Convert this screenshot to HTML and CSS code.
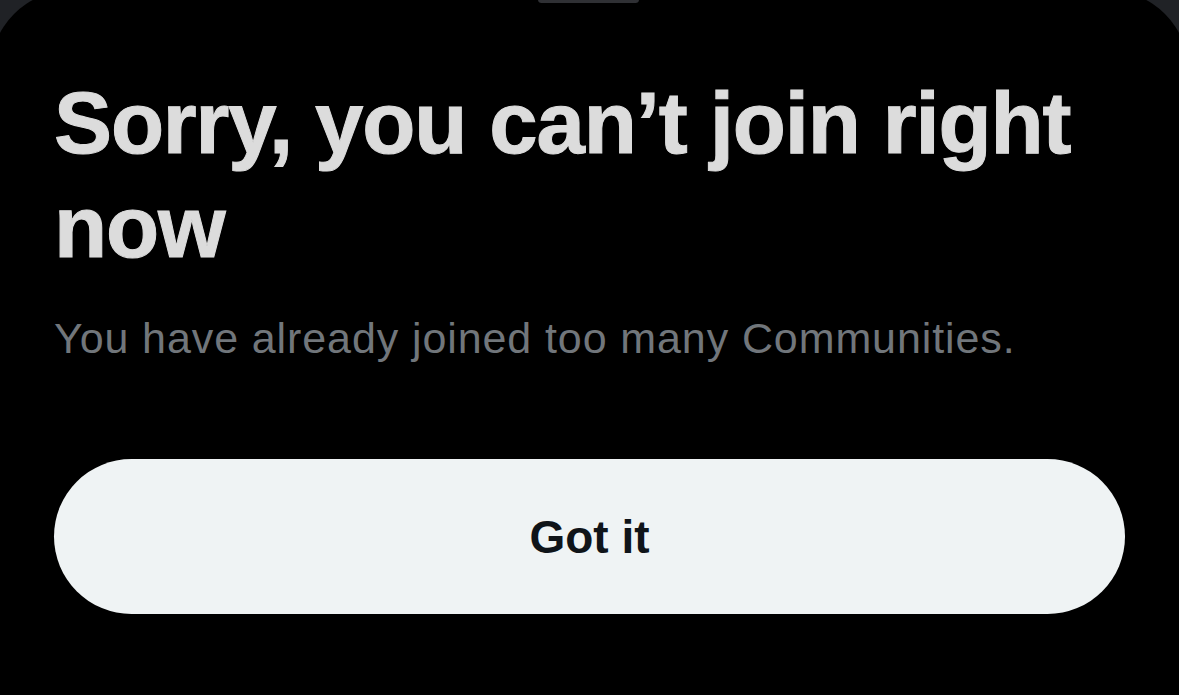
FILE: index.html
```html
<!DOCTYPE html>
<html lang="en">
<head>
  <meta charset="UTF-8">
  <meta name="viewport" content="width=device-width, initial-scale=1.0">
  <title>Sorry, you can’t join right now</title>
  <link rel="stylesheet" href="styles.css">
</head>
<body>
  <div class="sheet">
    <div class="handle"></div>
    <h1 class="title">Sorry, you can’t join right now</h1>
    <p class="message">You have already joined too many Communities.</p>
    <button class="got-it">Got it</button>
  </div>
</body>
</html>
```

FILE: styles.css
```css
* {
  box-sizing: border-box;
}
body {
  margin: 0;
  height: 695px;
  overflow: hidden;
  background: #202226;
  font-family: 'Liberation Sans', Arial, sans-serif;
}
.sheet {
  position: relative;
  margin: -10px -10px 0;
  min-height: 720px;
  padding: 81px 64px 0;
  background: #000;
  border-radius: 82px 82px 0 0;
}
.handle {
  position: absolute;
  top: 6px;
  left: 548px;
  width: 101px;
  height: 7px;
  border-radius: 4px;
  background: #2f3034;
}
.title {
  margin: 0;
  font-size: 87px;
  line-height: 104px;
  font-weight: 700;
  color: #dcdcdc;
  letter-spacing: -1.15px;
  -webkit-text-stroke: 1px #dcdcdc;
}
.message {
  margin: 33px 0 0;
  font-size: 43px;
  line-height: 52px;
  color: #71767b;
  letter-spacing: 0.9px;
}
.got-it {
  display: block;
  width: 100%;
  height: 155px;
  margin-top: 95px;
  border: none;
  border-radius: 78px;
  background: #eff3f4;
  color: #0f1419;
  font-family: inherit;
  font-size: 46px;
  font-weight: 700;
  cursor: pointer;
}
```
